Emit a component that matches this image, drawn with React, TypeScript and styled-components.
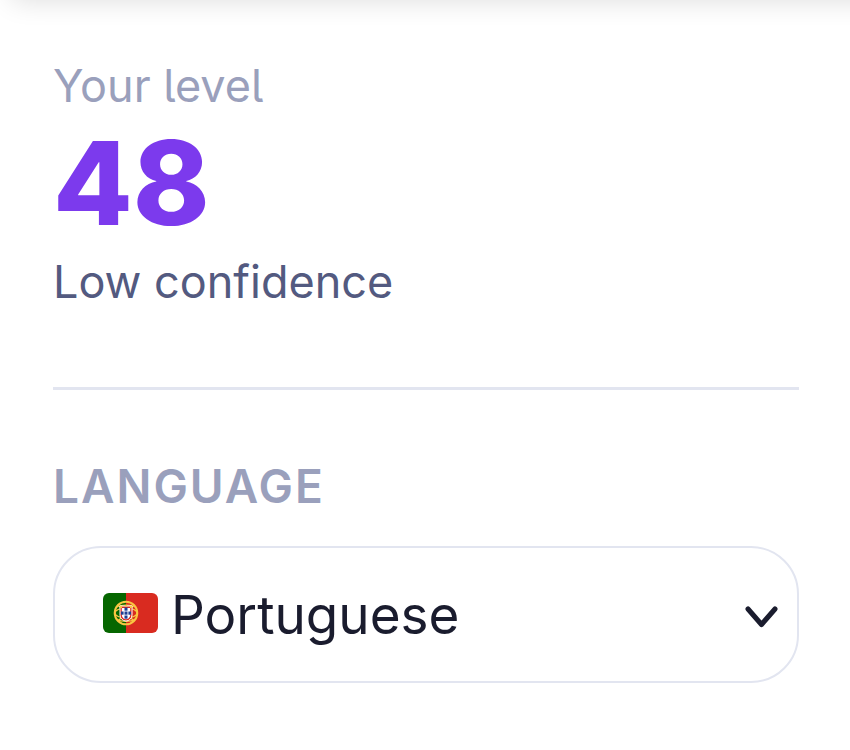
import React from "react";
import styled, { createGlobalStyle } from "styled-components";

const GlobalStyle = createGlobalStyle`
  * { box-sizing: border-box; }
  body {
    margin: 0;
    background: #ffffff;
    overflow-x: hidden;
    font-family: "Inter", "Liberation Sans", sans-serif;
    font-feature-settings: "cv05" 1;
  }
`;

const Page = styled.main`
  display: flow-root;
  overflow: hidden;
`;

const TopBar = styled.div`
  height: 48px;
  margin: -48px -48px 0 12px;
  box-shadow: 0 0 28px rgba(0, 0, 0, 0.14);
`;

const Panel = styled.div`
  padding: 56px 51px 0 53px;
`;

const Level = styled.section`
  display: flex;
  flex-direction: column;
  padding-bottom: 74px;
  border-bottom: 3px solid #e2e5f0;
`;

const Caption = styled.span`
  font-size: 45px;
  line-height: 60px;
  color: #9aa0bc;
`;

const Score = styled.strong`
  font-size: 116px;
  line-height: 134px;
  font-weight: 800;
  color: #7c3aed;
`;

const Confidence = styled(Caption)`
  line-height: 63px;
  color: #535a80;
`;

const Field = styled.div`
  display: flex;
  flex-direction: column;
  gap: 30px;
  padding-top: 66px;
`;

const Label = styled.label`
  font-size: 46px;
  line-height: 60px;
  font-weight: 600;
  letter-spacing: 2px;
  text-transform: uppercase;
  color: #9aa0bc;
`;

const SelectBox = styled.div`
  position: relative;
`;

const Select = styled.select`
  appearance: none;
  display: block;
  width: 100%;
  height: 137px;
  padding: 0 72px 0 116px;
  border: 2px solid #e2e5f0;
  border-radius: 48px;
  background: transparent;
  color: #1a1c2e;
  font: inherit;
  font-feature-settings: inherit;
  font-size: 53px;
`;

const FlagSlot = styled.svg`
  position: absolute;
  left: 50px;
  top: 47px;
  width: 55px;
  height: 40px;
  pointer-events: none;
`;

const Chevron = styled.svg`
  position: absolute;
  right: 21px;
  top: 60px;
  width: 33px;
  height: 22px;
  pointer-events: none;
`;

function Flag() {
  return (
    <FlagSlot viewBox="0 0 55 40" aria-hidden="true">
      <defs>
        <clipPath id="flag-shape">
          <rect width="55" height="40" rx="6" />
        </clipPath>
      </defs>
      <g clipPath="url(#flag-shape)">
        <rect width="23" height="40" fill="#066600" />
        <rect x="23" width="32" height="40" fill="#d92b20" />
      </g>
      <g fill="none" stroke="#f9c642">
        <circle cx="23" cy="20" r="11.3" strokeWidth="2" />
        <ellipse cx="23" cy="20" rx="11" ry="5" strokeWidth="1.2" />
        <path d="M13 14 Q23 10 33 14 M13 26 Q23 31 33 26 M15 12 L31 28 M31 12 L15 28" strokeWidth="1.2" />
      </g>
      <path d="M17 13h12v9a6 6 0 0 1-12 0z" fill="#d92b20" stroke="#ffffff" strokeWidth="1" />
      <path d="M18.8 15h8.4v7a4.2 4.2 0 0 1-8.4 0z" fill="#ffffff" />
      <g fill="#1d3f94">
        <rect x="21.5" y="14.5" width="3" height="3.2" />
        <rect x="21.5" y="18.5" width="3" height="3.2" />
        <rect x="21.5" y="22.5" width="3" height="3.2" />
        <rect x="18" y="18.5" width="2.6" height="3.2" />
        <rect x="25.4" y="18.5" width="2.6" height="3.2" />
      </g>
      <path d="M17 13h2v2h-2z M27 13h2v2h-2z M22 12h2v1.6h-2z" fill="#f9c642" />
    </FlagSlot>
  );
}

export default function App() {
  return (
    <>
      <GlobalStyle />
      <Page>
        <TopBar />
        <Panel>
          <Level>
            <Caption>Your level</Caption>
            <Score>48</Score>
            <Confidence>Low confidence</Confidence>
          </Level>
          <Field>
            <Label htmlFor="language">Language</Label>
            <SelectBox>
              <Select id="language" defaultValue="pt">
                <option value="pt">Portuguese</option>
              </Select>
              <Flag />
              <Chevron viewBox="0 0 33 22" aria-hidden="true">
                <path d="M3 3 L16.5 18.5 L30 3" fill="none" stroke="#1a1c2e" strokeWidth="5" strokeLinecap="round" strokeLinejoin="round" />
              </Chevron>
            </SelectBox>
          </Field>
        </Panel>
      </Page>
    </>
  );
}
